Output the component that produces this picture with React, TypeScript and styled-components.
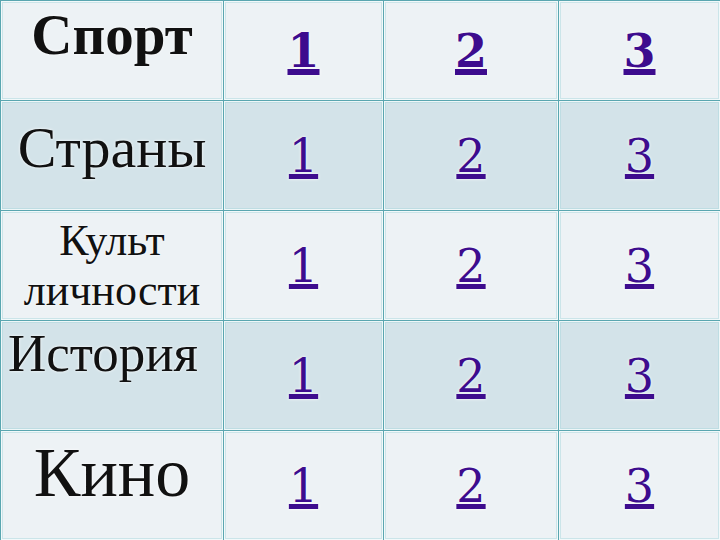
import React from "react";
import styled, { createGlobalStyle } from "styled-components";

const Global = createGlobalStyle`
  html, body { margin: 0; padding: 0; }
  body { width: 720px; height: 540px; overflow: hidden; background: #edf2f5; }
`;

const Grid = styled.div`
  display: grid;
  grid-template-columns: 223px 160px 175px 162px;
  grid-template-rows: 100px 110px 110px 110px 110px;
  width: 720px;
  height: 540px;
  box-sizing: border-box;
  border-top: 1px solid #5aa6b0;
  border-left: 1px solid #5aa6b0;
`;

const Cell = styled.div<{ $dark: boolean }>`
  box-sizing: border-box;
  border-right: 1px solid #5aa6b0;
  border-bottom: 1px solid #5aa6b0;
  box-shadow: inset 0 0 0 1px rgba(255, 255, 255, 0.75), inset 0 0 0 2px rgba(170, 215, 222, 0.5);
  background: ${(p) => (p.$dark ? "#d3e3e9" : "#edf2f5")};
  display: flex;
  justify-content: center;
`;

const LabelCell = styled(Cell)<{ $valign: string; $pt: number; $pr: number }>`
  align-items: ${(p) => p.$valign};
  padding-top: ${(p) => p.$pt}px;
  padding-right: ${(p) => p.$pr}px;
`;

const Label = styled.div<{ $size: number; $bold: boolean }>`
  font-family: "Liberation Serif", "Times New Roman", serif;
  font-size: ${(p) => p.$size}px;
  font-weight: ${(p) => (p.$bold ? 700 : 400)};
  line-height: 1.12;
  color: #111;
  text-align: center;
  white-space: nowrap;
  text-shadow: 0 0 3px #fff;
`;

const NumCell = styled(Cell)`
  align-items: center;
`;

const Num = styled.a<{ $bold: boolean }>`
  font-family: "DejaVu Serif", "Liberation Serif", serif;
  font-size: 46px;
  line-height: 1;
  font-weight: ${(p) => (p.$bold ? 700 : 400)};
  color: #3d0c8e;
  text-decoration: underline;
  text-decoration-thickness: ${(p) => (p.$bold ? 6 : 5)}px;
  text-underline-offset: 2px;
  text-shadow: 0 0 3px #fff;
  cursor: pointer;
`;

type Row = {
  label: React.ReactNode;
  size: number;
  bold: boolean;
  valign: string;
  pt: number;
  pr: number;
};

const rows: Row[] = [
  { label: "Спорт", size: 57, bold: true, valign: "flex-start", pt: 2, pr: 0 },
  { label: "Страны", size: 58, bold: false, valign: "flex-start", pt: 15, pr: 0 },
  { label: <>Культ<br />личности</>, size: 44, bold: false, valign: "center", pt: 0, pr: 0 },
  { label: "История", size: 53, bold: false, valign: "flex-start", pt: 3, pr: 18 },
  { label: "Кино", size: 70, bold: false, valign: "flex-start", pt: 3, pr: 0 },
];

export default function App() {
  return (
    <>
      <Global />
      <Grid>
        {rows.map((r, i) => {
          const dark = i % 2 === 1;
          return (
            <React.Fragment key={i}>
              <LabelCell $dark={dark} $valign={r.valign} $pt={r.pt} $pr={r.pr}>
                <Label $size={r.size} $bold={r.bold}>{r.label}</Label>
              </LabelCell>
              {[1, 2, 3].map((n) => (
                <NumCell key={n} $dark={dark}>
                  <Num $bold={i === 0}>{n}</Num>
                </NumCell>
              ))}
            </React.Fragment>
          );
        })}
      </Grid>
    </>
  );
}
